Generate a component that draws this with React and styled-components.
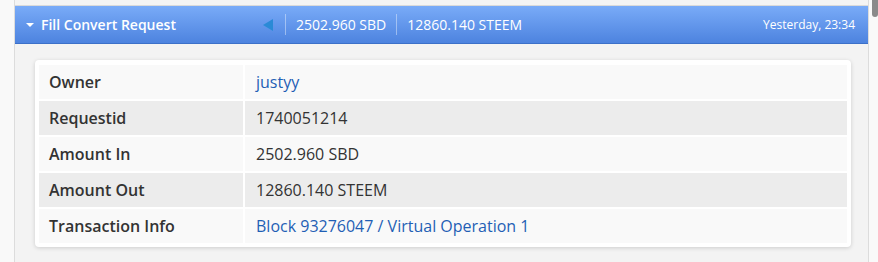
import React from 'react';
import styled, { createGlobalStyle } from 'styled-components';

const GlobalStyle = createGlobalStyle`
  body {
    margin: 0;
    background: #f9f9f9;
    font-family: "Open Sans", "Liberation Sans", sans-serif;
  }
`

const Page = styled.div`
  position: relative;
  height: 262px;
  padding-left: 14px;
  overflow: hidden;
`

const ScrollThumb = styled.div`
  position: absolute;
  top: -4px;
  right: 0;
  width: 6px;
  height: 21px;
  border-radius: 3px;
  background: #8a8a8a;
`

const Panel = styled.div`
  width: 853px;
  height: 100%;
  border-left: 1px solid #dcdcdc;
  border-right: 1px solid #dcdcdc;
  background: #f3f3f3;
`

const TopStrip = styled.div`
  height: 5px;
  background: #f4f4f4;
  border-bottom: 1px solid #dadada;
`

const Header = styled.div`
  display: flex;
  align-items: center;
  height: 37px;
  background: linear-gradient(to bottom, #79abf8, #4d83df);
  border-bottom: 1px solid #3c70c8;
  color: #fff;
  font-size: 14px;
`

const TitleBlock = styled.div`
  display: flex;
  align-items: center;
  gap: 7px;
  width: 237px;
  padding-left: 11px;
  font-weight: 600;
`

const Caret = styled.span`
  width: 0;
  height: 0;
  border-left: 4px solid transparent;
  border-right: 4px solid transparent;
  border-top: 4px solid #fff;
  margin-top: 1px;
`

const Arrow = styled.span`
  width: 0;
  height: 0;
  border-top: 6px solid transparent;
  border-bottom: 6px solid transparent;
  border-right: 10px solid #2a8ad6;
  margin-right: 12px;
`

const Sep = styled.span`
  width: 1px;
  height: 21px;
  background: rgba(255, 255, 255, 0.4);
  margin: 0 10px 0 0;
`

const Stat = styled.span`
  margin-right: 10px;
`

const Time = styled.span`
  margin-left: auto;
  padding-right: 13px;
  font-size: 12px;
`

const Body = styled.div`
  padding: 16px 17px 15px 20px;
`

const Card = styled.div`
  background: #fff;
  border-radius: 4px;
  box-shadow: 0 1px 4px rgba(0, 0, 0, 0.16);
  padding: 5px 4px 4px 4px;
  display: grid;
  grid-template-columns: 204px 1fr;
  gap: 2px;
`

const Cell = styled.div`
  height: 34px;
  display: flex;
  align-items: center;
  padding-left: ${p => (p.label ? '10px' : '11px')};
  background: ${p => (p.alt ? '#ececec' : '#f9f9f9')};
  color: #333;
  font-size: 16px;
  font-weight: ${p => (p.label ? 600 : 400)};
`

const Link = styled.a`
  color: #1f5fb5;
  text-decoration: none;
`

const Links = styled.span`
  color: #1f5fb5;
`

const rows = [
  ['Owner', <Link href="#">justyy</Link>],
  ['Requestid', '1740051214'],
  ['Amount In', '2502.960 SBD'],
  ['Amount Out', '12860.140 STEEM'],
  ['Transaction Info', <Links><Link href="#">Block 93276047</Link> / <Link href="#">Virtual Operation 1</Link></Links>],
]

export default function App() {
  return (
    <Page>
      <GlobalStyle />
      <Panel>
        <TopStrip />
        <Header>
          <TitleBlock>
            <Caret />
            Fill Convert Request
          </TitleBlock>
          <Arrow />
          <Sep />
          <Stat>2502.960 SBD</Stat>
          <Sep />
          <Stat>12860.140 STEEM</Stat>
          <Time>Yesterday, 23:34</Time>
        </Header>
        <Body>
          <Card>
            {rows.map(([label, value], i) => (
              <React.Fragment key={label}>
                <Cell label alt={i % 2 === 1}>{label}</Cell>
                <Cell alt={i % 2 === 1}>{value}</Cell>
              </React.Fragment>
            ))}
          </Card>
        </Body>
      </Panel>
      <ScrollThumb />
    </Page>
  );
}
